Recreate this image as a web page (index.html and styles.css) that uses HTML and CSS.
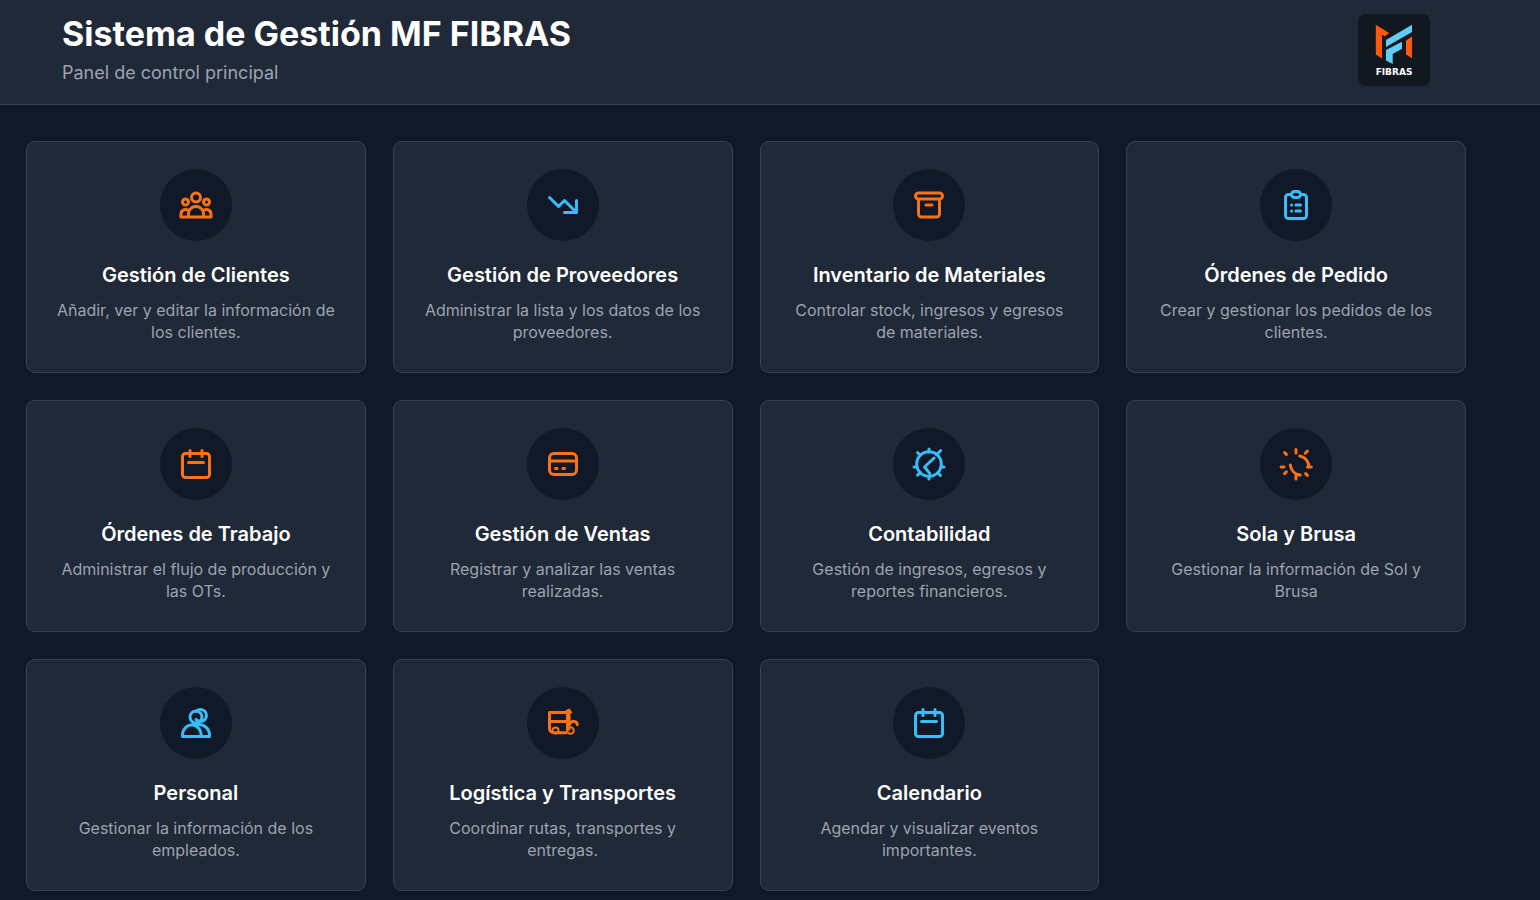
FILE: index.html
```html
<!DOCTYPE html>
<html lang="es">
<head>
  <meta charset="UTF-8" />
  <meta name="viewport" content="width=device-width, initial-scale=1.0" />
  <title>Sistema de Gestión MF FIBRAS</title>
  <link rel="stylesheet" href="styles.css">
</head>
<body>
  <header>
    <div>
      <h1>Sistema de Gestión MF FIBRAS</h1>
      <p>Panel de control principal</p>
    </div>
    <svg class="logo" viewBox="0 0 72 72" role="img" aria-label="MF Fibras">
      <rect width="72" height="72" rx="7" fill="#111820" />
      <path fill="#ff5a0a" d="M17.8 10.8L31.2 19l-4.4 3.2-2.8-1.4v23.7l-6.2-4zM48 26.5l6-3.9v21.6l-6-3.7z" />
      <path fill="#62cdf2" d="M28 26l26-15.2V18L28 33zM28 36l16-8.2v7L34.7 40v10L28 46.6z" />
      <text x="36" y="61" text-anchor="middle">FIBRAS</text>
    </svg>
  </header>

  <main class="grid">
    <a href="#clientes" class="card">
      <span class="icon orange">
        <svg viewBox="0 0 24 24"><path d="M17 20h5v-2a3 3 0 00-5.356-1.857M17 20H7m10 0v-2c0-.656-.126-1.283-.356-1.857M7 20H2v-2a3 3 0 015.356-1.857M7 20v-2c0-.656.126-1.283.356-1.857m0 0a5.002 5.002 0 019.288 0M15 7a3 3 0 11-6 0 3 3 0 016 0zm6 3a2 2 0 11-4 0 2 2 0 014 0zM7 10a2 2 0 11-4 0 2 2 0 014 0z" /></svg>
      </span>
      <h2>Gestión de Clientes</h2>
      <p>Añadir, ver y editar la información de los clientes.</p>
    </a>

    <a href="#proveedores" class="card">
      <span class="icon blue">
        <svg viewBox="0 0 24 24"><path d="M13 17h8m0 0V9m0 8l-8-8-4 4-6-6" /></svg>
      </span>
      <h2>Gestión de Proveedores</h2>
      <p>Administrar la lista y los datos de los proveedores.</p>
    </a>

    <a href="#inventario" class="card">
      <span class="icon orange">
        <svg viewBox="0 0 24 24"><path d="M5 8h14M5 8a2 2 0 110-4h14a2 2 0 110 4M5 8v10a2 2 0 002 2h10a2 2 0 002-2V8m-9 4h4" /></svg>
      </span>
      <h2>Inventario de Materiales</h2>
      <p>Controlar stock, ingresos y egresos de materiales.</p>
    </a>

    <a href="#pedidos" class="card">
      <span class="icon blue">
        <svg viewBox="0 0 24 24"><path d="M9 5H7a2 2 0 00-2 2v12a2 2 0 002 2h10a2 2 0 002-2V7a2 2 0 00-2-2h-2M9 5a2 2 0 002 2h2a2 2 0 002-2M9 5a2 2 0 012-2h2a2 2 0 012 2m-3 7h3m-3 4h3m-6-4h.01M9 16h.01" /></svg>
      </span>
      <h2>Órdenes de Pedido</h2>
      <p>Crear y gestionar los pedidos de los clientes.</p>
    </a>

    <a href="#trabajo" class="card">
      <span class="icon orange">
        <svg viewBox="0 0 24 24"><path d="M8 7V3m8 4V3m-9 8h10M5 21h14a2 2 0 002-2V7a2 2 0 00-2-2H5a2 2 0 00-2 2v12a2 2 0 002 2z" /></svg>
      </span>
      <h2>Órdenes de Trabajo</h2>
      <p>Administrar el flujo de producción y las OTs.</p>
    </a>

    <a href="#ventas" class="card">
      <span class="icon orange">
        <svg viewBox="0 0 24 24"><path d="M3 10h18M7 15h1m4 0h1m-7 4h12a3 3 0 003-3V8a3 3 0 00-3-3H6a3 3 0 00-3 3v8a3 3 0 003 3z" /></svg>
      </span>
      <h2>Gestión de Ventas</h2>
      <p>Registrar y analizar las ventas realizadas.</p>
    </a>

    <a href="#contabilidad" class="card">
      <span class="icon blue">
        <svg viewBox="0 0 24 24"><circle cx="12" cy="12" r="8.2" /><path d="M12 2v2M12 20v2M2 14h2M20 14h2M4.4 4.4l1.8 1.8M19.8 3l-2.8 2.8M4.4 19.4l1.8-1.8M19.6 19.6l-1.8-1.8M15.4 8L9 14l3.6 4.4" /></svg>
      </span>
      <h2>Contabilidad</h2>
      <p>Gestión de ingresos, egresos y reportes financieros.</p>
    </a>

    <a href="#sola-brusa" class="card">
      <span class="icon orange">
        <svg viewBox="0 0 24 24"><path d="M12 2.400v2.200M19.600 3.400L18.200 4.800M4.400 4.400l1.200 1.200M2 14h2M4.400 18.400l1.200-1.200M18.400 18.400l1.200 1.200M14.500 6.600c3.500.6 6 3.600 6.100 7.400M19.600 14h2.600M8.200 12.600c.4 3.500 3 6.300 6.600 6.800M12 22v-3.200l2.600.5" /></svg>
      </span>
      <h2>Sola y Brusa</h2>
      <p>Gestionar la información de Sol y Brusa</p>
    </a>

    <a href="#personal" class="card">
      <span class="icon blue">
        <svg viewBox="0 0 24 24"><path d="M12 4.354a4 4 0 110 5.292M16 8a4 4 0 11-8 0 4 4 0 018 0zM15.500 21H3v-1a6.200 6.600 0 0112.400 0v1zm0 0H21v-1a7 7 0 00-7-7h-4" /></svg>
      </span>
      <h2>Personal</h2>
      <p>Gestionar la información de los empleados.</p>
    </a>

    <a href="#logistica" class="card">
      <span class="icon orange">
        <svg viewBox="0 0 24 24"><path d="M14 18.500H6a3 3 0 01-3-3V5h12v11M3 11h12M16 4.500V16M16 13l2-2h1.500a2 2 0 012 2" /><path class="thin" d="M9 17a2 2 0 11-4 0 2 2 0 014 0zM19.200 17a2.200 2.200 0 11-4.400 0 2.200 2.200 0 014.400 0zM14 4l2-1 1.500 2" /></svg>
      </span>
      <h2>Logística y Transportes</h2>
      <p>Coordinar rutas, transportes y entregas.</p>
    </a>

    <a href="#calendario" class="card">
      <span class="icon blue">
        <svg viewBox="0 0 24 24"><path d="M8 7V3m8 4V3m-9 8h10M5 21h14a2 2 0 002-2V7a2 2 0 00-2-2H5a2 2 0 00-2 2v12a2 2 0 002 2z" /></svg>
      </span>
      <h2>Calendario</h2>
      <p>Agendar y visualizar eventos importantes.</p>
    </a>
  </main>
</body>
</html>
```
FILE: styles.css
```css
* {
  box-sizing: border-box;
  margin: 0;
  padding: 0;
}

body {
  font-family: Inter, sans-serif;
  background-color: #111827;
  color: white;
}

header {
  background-color: #1f2937;
  border-bottom: 1px solid #374151;
  padding: 14px 110px 17px 62px;
  display: flex;
  align-items: flex-start;
  justify-content: space-between;
}

header h1 {
  font-size: 34px;
  line-height: 40px;
  font-weight: 700;
}

header p {
  color: #9ca3af;
  font-size: 18px;
  line-height: 28px;
  margin-top: 5px;
}

.logo {
  width: 72px;
  height: 72px;
}

.logo text {
  font-family: "DejaVu Sans", sans-serif;
  font-size: 9px;
  font-weight: 700;
  fill: white;
}

.grid {
  display: grid;
  grid-template-columns: repeat(4, 1fr);
  gap: 27px;
  padding: 36px 74px 9px 26px;
}

.card {
  background-color: #1f2937;
  border: 1px solid #374151;
  border-radius: 9px;
  padding: 27px 27px 29px;
  display: flex;
  flex-direction: column;
  align-items: center;
  text-align: center;
  text-decoration: none;
  color: white;
}

.card:hover {
  border-color: #f97316;
}

.icon {
  width: 72px;
  height: 72px;
  border-radius: 50%;
  background-color: #111827;
  display: flex;
  align-items: center;
  justify-content: center;
  margin-bottom: 18px;
}

.icon svg {
  width: 36px;
  height: 36px;
  fill: none;
  stroke: currentColor;
  stroke-width: 2;
  stroke-linecap: round;
  stroke-linejoin: round;
}

.icon .thin {
  stroke-width: 1.3;
}

.orange {
  color: #f97316;
}

.blue {
  color: #38bdf8;
}

.card h2 {
  font-size: 20px;
  line-height: 32px;
  font-weight: 600;
  margin-bottom: 8px;
}

.card p {
  color: #9ca3af;
  font-size: 16px;
  line-height: 22px;
}
```
